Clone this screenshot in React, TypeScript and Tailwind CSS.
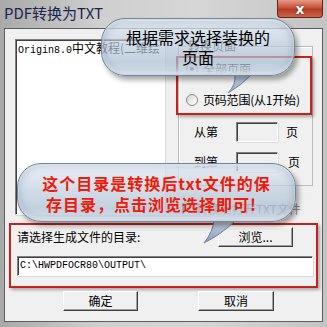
import React from 'react';

const sunken = 'border border-t-[#808080] border-l-[#808080] border-b-white border-r-white shadow-[inset_1px_1px_0_#404040,1px_1px_0_#dcdcdc]';
const raised = 'border border-t-white border-l-white border-b-[#404040] border-r-[#404040] shadow-[inset_-1px_-1px_0_#a0a0a0]';

function Radio({ checked }: { checked?: boolean }) {
  return (
    <span className="w-[12px] h-[12px] rounded-full border border-[#8a8a8a] bg-gradient-to-br from-[#d8d8d8] to-white flex items-center justify-center shrink-0">
      {checked && <span className="w-[4px] h-[4px] rounded-full bg-[#222]" />}
    </span>
  );
}

function Bubble({ className, children }: { className: string; children: React.ReactNode }) {
  return (
    <div
      className={`absolute rounded-[24px] border border-[#71869f] bg-[linear-gradient(to_bottom,rgba(228,236,246,0.8)_0%,rgba(196,210,226,0.66)_35%,rgba(170,189,210,0.72)_78%,rgba(214,226,239,0.9)_100%)] shadow-[3px_4px_5px_rgba(0,0,0,0.35),inset_0_0_9px_rgba(80,102,132,0.45),inset_0_2px_2px_rgba(255,255,255,0.9),inset_0_-3px_3px_rgba(255,255,255,0.7)] flex flex-col items-center justify-center ${className}`}
    >
      {children}
    </div>
  );
}

export default function App() {
  return (
    <div className="relative w-[327px] h-[327px] overflow-hidden bg-[linear-gradient(to_right,#a9a9a9,#cfcfcf_30%,#d6d6d6_60%,#c4c4c4)] font-['Noto_Sans_CJK_SC',sans-serif]">
      {/* title bar */}
      <div className="h-[28px] flex items-start justify-between">
        <span className="pl-[4px] pt-[4px] text-[15px] leading-[18px] text-[#1b2450]">PDF转换为TXT</span>
        <div className="mr-[4px] w-[46px] h-[18px] rounded-b-[4px] border border-t-0 border-[#6b2318] bg-[linear-gradient(to_bottom,#e49a86,#c9513a_45%,#b43a24_55%,#c8654a)] flex items-center justify-center">
          <span className="text-white font-bold text-[14px] leading-none [text-shadow:0_0_2px_#5a1a10] font-['DejaVu_Sans',sans-serif]">x</span>
        </div>
      </div>

      {/* client */}
      <div className="mx-[4px] h-[294px] border border-[#5d5d5d] bg-[#f0f0f0] text-[12px] leading-[14px] text-black">
        <div className="flex">
          {/* list box */}
          <div className={`ml-[10px] mt-[10px] w-[150px] h-[176px] bg-white ${sunken} font-['Liberation_Mono',monospace] text-[10px] leading-[14px] pl-[2px] pt-[1px] whitespace-nowrap overflow-hidden`}>
            Origin8.0<span className="font-['Noto_Sans_CJK_SC',sans-serif] text-[12px]">中文教程(二维绘</span>
          </div>

          <div className="ml-[13px] flex flex-col">
            {/* group box */}
            <div className="relative mt-[17px] w-[135px] h-[140px] border border-[#bcbcbc] shadow-[inset_1px_1px_0_white]">
              <span className="absolute left-[7px] top-[-8px] bg-[#f0f0f0] px-[2px] text-[#333]">转换页面</span>
              <div className="pl-[7px] pt-[15px] flex flex-col">
                <div className="flex items-center gap-[5px] h-[14px]">
                  <Radio checked />
                  <span>全部页面</span>
                </div>
                <div className="flex items-center gap-[5px] h-[14px] mt-[17px]">
                  <Radio />
                  <span className="tracking-[-0.2px]">页码范围(从1开始)</span>
                </div>
                <div className="flex items-center mt-[15px] h-[20px]">
                  <span className="ml-[8px] w-[42px]">从第</span>
                  <div className={`w-[42px] h-[20px] bg-[#f0f0f0] ${sunken}`} />
                  <span className="ml-[8px]">页</span>
                </div>
                <div className="flex items-center mt-[10px] h-[20px]">
                  <span className="ml-[8px] w-[42px]">到第</span>
                  <div className={`w-[42px] h-[20px] bg-[#f0f0f0] ${sunken}`} />
                  <span className="ml-[10px]">页</span>
                </div>
              </div>
            </div>
            <div className="mt-[16px] ml-[4px] flex items-center gap-[2px] text-[#8c8c8c]">
              <span className={`w-[12px] h-[12px] bg-white ${sunken}`} />
              <span>转换后打开TXT文件</span>
            </div>
          </div>
        </div>

        {/* directory section */}
        <div className="ml-[4px] mt-[7px] w-[309px] h-[65px] border-2 border-[#c8231a] shadow-[2px_2px_3px_rgba(0,0,0,0.3)] px-[4px] pt-[1px]">
          <div className="flex items-center justify-between h-[22px]">
            <span className="ml-[2px]">请选择生成文件的目录:</span>
            <div className={`mr-[19px] w-[75px] h-[20px] bg-[#f0f0f0] ${raised} flex items-center justify-center`}>浏览...</div>
          </div>
          <div className={`mt-[8px] ml-[2px] w-[296px] h-[20px] bg-white ${sunken} flex items-center pl-[2px] font-['Liberation_Mono',monospace] text-[10px]`}>
            C:\HWPDFOCR80\OUTPUT\
          </div>
        </div>

        {/* buttons */}
        <div className="flex mt-[3px]">
          <div className={`ml-[58px] w-[75px] h-[20px] bg-[#f0f0f0] ${raised} flex items-center justify-center`}>确定</div>
          <div className={`ml-[60px] w-[76px] h-[20px] bg-[#f0f0f0] ${raised} flex items-center justify-center`}>取消</div>
        </div>
      </div>

      {/* annotation: red box around radios */}
      <div className="absolute left-[176px] top-[56px] w-[136px] h-[59px] border-2 border-[#c8231a] shadow-[2px_2px_3px_rgba(0,0,0,0.3)]" />

      {/* bubble 1 */}
      <svg className="absolute left-[220px] top-[70px]" width="40" height="30" viewBox="0 0 40 30">
        <defs>
          <linearGradient id="t1" x1="0" y1="0" x2="0" y2="1">
            <stop offset="0" stopColor="#bccbdb" stopOpacity="0.85" />
            <stop offset="1" stopColor="#8ea3bc" stopOpacity="0.9" />
          </linearGradient>
        </defs>
        <path d="M15 4 Q16 15 8 23 Q22 15 32 4 Z" fill="url(#t1)" stroke="#71869f" strokeWidth="1" />
      </svg>
      <Bubble className="left-[101px] top-[18px] w-[194px] h-[58px]">
        <span className="text-[16px] leading-[20px] text-black">根据需求选择装换的</span>
        <span className="text-[16px] leading-[20px] text-black">页面</span>
      </Bubble>
      <svg className="absolute left-[200px] top-[216px]" width="40" height="30" viewBox="0 0 40 30">
        <defs>
          <linearGradient id="t2" x1="0" y1="0" x2="0" y2="1">
            <stop offset="0" stopColor="#c9d6e4" stopOpacity="0.95" />
            <stop offset="1" stopColor="#8096b0" stopOpacity="0.95" />
          </linearGradient>
        </defs>
        <path d="M14 4 Q13 16 4 27 Q22 18 36 4 Z" fill="url(#t2)" stroke="#71869f" strokeWidth="1" />
      </svg>
      {/* bubble 2 */}
      <Bubble className="left-[17px] top-[163px] w-[279px] h-[59px]">
        <span className="text-[16px] leading-[21px] font-bold text-[#f01a0a] tracking-[1px] mt-[2px]">这个目录是转换后txt文件的保</span>
        <span className="text-[16px] leading-[21px] font-bold text-[#f01a0a] tracking-[1px] -ml-[10px]">存目录，点击浏览选择即可!</span>
      </Bubble>
    </div>
  );
}
